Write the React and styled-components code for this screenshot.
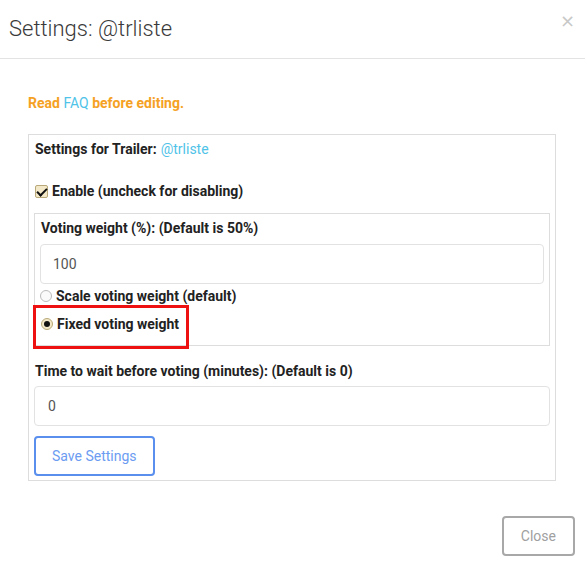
import styled, { createGlobalStyle } from "styled-components";

const GlobalStyle = createGlobalStyle`
  body {
    margin: 0;
    background: #fff;
    font-family: Roboto, "Liberation Sans", sans-serif;
    font-size: 14px;
    color: #222;
  }
`;

const Modal = styled.div`
  width: 585px;
  height: 566px;
  background: #fff;
  display: flex;
  flex-direction: column;
`;

const Header = styled.div`
  height: 58px;
  border-bottom: 1px solid #e3e3e3;
  display: flex;
  align-items: center;
  justify-content: space-between;
  padding: 0 10px 0 9px;
  box-sizing: content-box;
`;

const Title = styled.h4`
  margin: 0;
  font-size: 22px;
  font-weight: 300;
  color: #3a3a3a;
  padding-bottom: 2px;
`;

const CloseX = styled.button`
  border: 0;
  background: none;
  color: #c8c8c8;
  font-size: 18px;
  line-height: 1;
  padding: 0;
  margin-top: -16px;
  cursor: pointer;
  font-family: "DejaVu Sans", sans-serif;
`;

const Body = styled.div`
  padding: 34px 29px 0 28px;
`;

const Notice = styled.p`
  margin: 0 0 21px;
  line-height: 20px;
  font-weight: 700;
  color: #f5a124;
`;

const Link = styled.a`
  color: #4fc3e8;
  font-weight: 400;
  text-decoration: none;
`;

const Box = styled.div`
  position: relative;
  border: 1px solid #ddd;
  padding: ${(p) => p.$pad};
`;

const Label = styled.label`
  display: flex;
  align-items: center;
  gap: 4px;
  line-height: 20px;
  font-weight: 700;
  color: #222;
  margin: ${(p) => p.$m || "0"};
`;

const Check = styled.input.attrs({ type: "checkbox" })`
  appearance: none;
  margin: 0;
  width: 13px;
  height: 13px;
  border: 1px solid #b9a97a;
  border-radius: 2px;
  background: #f3e8c8;
  position: relative;
  &:checked::after {
    content: "";
    position: absolute;
    left: 3px;
    top: 0px;
    width: 4px;
    height: 8px;
    border: solid #111;
    border-width: 0 2px 2px 0;
    transform: rotate(45deg);
  }
`;

const Radio = styled.input.attrs({ type: "radio" })`
  appearance: none;
  margin: 0 0 0 ${(p) => p.$ml || "0"};
  width: 12px;
  height: 12px;
  border: 1px solid #bbb;
  border-radius: 50%;
  background: #fafafa;
  position: relative;
  &:checked {
    background: #f3e8c8;
    border-color: #b9a97a;
  }
  &:checked::after {
    content: "";
    position: absolute;
    left: 2px;
    top: 2px;
    width: 6px;
    height: 6px;
    border-radius: 50%;
    background: #111;
  }
`;

const Input = styled.input`
  display: block;
  width: 100%;
  box-sizing: border-box;
  height: 40px;
  border: 1px solid #e2e2e2;
  border-radius: 4px;
  padding: 0 ${(p) => p.$px || "12px"};
  font-family: inherit;
  font-size: 14px;
  color: #555;
  margin: ${(p) => p.$m || "0"};
  outline: none;
`;

const Highlight = styled.div`
  position: absolute;
  left: -2px;
  top: 91px;
  width: 156px;
  height: 44px;
  box-sizing: border-box;
  border: 3px solid #ee1111;
  pointer-events: none;
`;

const Button = styled.button`
  height: 40px;
  box-sizing: border-box;
  padding: 0 ${(p) => p.$px};
  margin-top: ${(p) => p.$mt || "0"};
  background: #fff;
  border: 2px solid ${(p) => p.$border};
  border-radius: 4px;
  color: ${(p) => p.$color};
  font-family: inherit;
  font-size: 14px;
  cursor: pointer;
`;

const Footer = styled.div`
  margin-top: auto;
  display: flex;
  justify-content: flex-end;
  padding: 0 10px 10px 0;
`;

export default function App() {
  return (
    <>
      <GlobalStyle />
      <Modal>
        <Header>
          <Title>Settings: @trliste</Title>
          <CloseX aria-label="close">×</CloseX>
        </Header>
        <Body>
          <Notice>
            Read <Link href="#" onClick={(e) => e.preventDefault()}>FAQ</Link> before editing.
          </Notice>
          <Box $pad="4px 5px 4px 5px">
            <Label as="div" $m="0 0 22px 1px">
              Settings for Trailer:
              <Link>@trliste</Link>
            </Label>
            <Label $m="0 0 12px 1px">
              <Check defaultChecked />
              Enable (uncheck for disabling)
            </Label>
            <Box $pad="4px 5px 1px 5px">
              <Label as="div" $m="0 0 6px 1px">
                Voting weight (%): (Default is 50%)
              </Label>
              <Input defaultValue="100" $px="12px" />
              <Label $m="2px 0 0 0">
                <Radio name="w" />
                Scale voting weight (default)
              </Label>
              <Label $m="8px 0 10px 0">
                <Radio name="w" defaultChecked $ml="1px" />
                Fixed voting weight
              </Label>
              <Highlight />
            </Box>
            <Label as="div" $m="15px 0 5px 1px">
              Time to wait before voting (minutes): (Default is 0)
            </Label>
            <Input defaultValue="0" $px="13px" />
            <Button $px="16px" $mt="10px" $border="#5a8fee" $color="#6c9cf2">
              Save Settings
            </Button>
          </Box>
        </Body>
        <Footer>
          <Button $px="17px" $border="#a8a8a8" $color="#a0a0a0">
            Close
          </Button>
        </Footer>
      </Modal>
    </>
  );
}
